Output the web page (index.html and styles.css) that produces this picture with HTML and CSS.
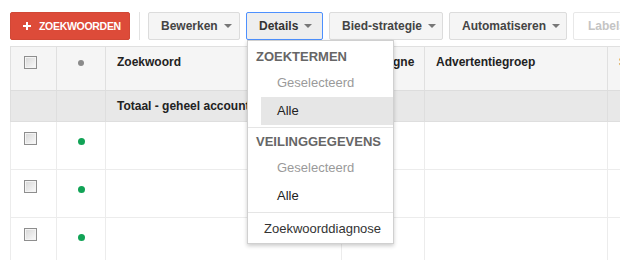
FILE: index.html
```html
<html lang="nl">
	<head>
	<title>Zoekwoorden</title>
	<link rel="stylesheet" href="styles.css">
	</head>
	<body>
<main>

			<div class="toolbar">
				<button class="btn btn-add"><span class="plus"></span>ZOEKWOORDEN</button>
				<span class="toolbar-sep"></span>
				<button class="btn btn-edit">Bewerken <span class="caret"></span></button>

				<!-- Details with its open menu -->
				<div class="dropdown">
					<button class="btn btn-open">Details <span class="caret"></span></button>
					<div class="menu">
						<div class="menu-head">ZOEKTERMEN</div>
						<div class="menu-item disabled">Geselecteerd</div>
						<div class="menu-item hover">Alle</div>
						<div class="menu-sep"></div>
						<div class="menu-head">VEILINGGEGEVENS</div>
						<div class="menu-item disabled">Geselecteerd</div>
						<div class="menu-item">Alle</div>
						<div class="menu-sep"></div>
						<div class="menu-plain">Zoekwoorddiagnose</div>
					</div>
				</div>

				<button class="btn btn-bid">Bied-strategie <span class="caret"></span></button>
				<button class="btn btn-auto">Automatiseren <span class="caret"></span></button>
				<button class="btn btn-off">Labels <span class="caret"></span></button>
			</div>

			<table class="grid">
				<colgroup>
					<col class="c-check"><col class="c-status"><col class="c-kw"><col class="c-camp"><col class="c-group"><col class="c-more">
				</colgroup>
				<thead>
					<tr>
						<th><span class="cb"></span></th>
						<th class="center"><span class="dot dot-head"></span></th>
						<th>Zoekwoord</th>
						<th>Campagne</th>
						<th>Advertentiegroep</th>
						<th>Status</th>
					</tr>
				</thead>
				<tbody>
					<tr class="total">
						<td></td><td></td><td>Totaal - geheel account</td><td></td><td></td><td></td>
					</tr>
					<tr>
						<td><span class="cb"></span></td><td class="center"><span class="dot"></span></td><td></td><td></td><td></td><td></td>
					</tr>
					<tr>
						<td><span class="cb"></span></td><td class="center"><span class="dot"></span></td><td></td><td></td><td></td><td></td>
					</tr>
					<tr>
						<td><span class="cb"></span></td><td class="center"><span class="dot"></span></td><td></td><td></td><td></td><td></td>
					</tr>
				</tbody>
			</table>

</main>
	</body>
</html>
```

FILE: styles.css
```css
html, body { margin:0; overflow:hidden; background:#ffffff; }
body { font-family:"Liberation Sans", Arial, sans-serif; color:#222222; }

/* toolbar */
.toolbar { display:flex; align-items:center; gap:6px; padding:12px 0 0 10px; height:28px; }
.btn { flex-shrink:0; white-space:nowrap; height:28px; padding:0 0 0 12px; border:1px solid #dcdcdc; border-radius:2px; background:#f5f5f5; color:#444444; font-family:inherit; font-size:12px; font-weight:bold; display:flex; align-items:center; gap:6px; }
.btn-add { width:120px; background:#dd4b39; border-color:#d14836; color:#ffffff; font-size:10.5px; letter-spacing:-0.3px; padding:0 0 0 12px; gap:8px; }
.btn-edit { width:92px; }
.btn-open { width:77px; border-color:#4d90fe; background:#eeeeee; color:#333333; }
.btn-bid { width:114px; }
.btn-auto { width:118px; }
.btn-off { width:90px; background:#ffffff; border-color:#e8e8e8; color:#c4c4c4; padding-left:14px; }
.btn-off .caret { border-top-color:#d0d0d0; }
.plus { width:8px; height:8px; flex-shrink:0; display:inline-block; background:linear-gradient(#fff,#fff) center/8px 2px no-repeat, linear-gradient(#fff,#fff) center/2px 8px no-repeat; }
.toolbar-sep { flex-shrink:0; width:1px; height:28px; background:#e2e2e2; margin:0 2px 0 3px; }
.caret { width:0; height:0; border-left:4px solid transparent; border-right:4px solid transparent; border-top:4px solid #777777; }

/* open menu */
.dropdown { position:relative; flex-shrink:0; }
.menu { position:absolute; top:100%; left:1px; width:145px; padding-top:2px; background:#ffffff; border:1px solid #d0d0d0; box-shadow:0 2px 4px rgba(0,0,0,0.2); z-index:2; font-size:13px; }
.menu-head { height:26px; line-height:28px; padding-left:8px; font-weight:bold; color:#666666; }
.menu-item { height:28px; line-height:28px; margin-left:13px; padding-left:16px; color:#222222; }
.menu-item.disabled { color:#9a9a9a; }
.menu-item.hover { background:#e6e6e6; }
.menu-sep { height:1px; background:#e5e5e5; margin:2px 0 0 0; }
.menu-plain { height:30px; line-height:31px; padding-left:16px; color:#333333; }

/* table */
.grid { margin:6px 0 0 10px; border-collapse:collapse; table-layout:fixed; width:720px; font-size:12px; }
.c-check { width:46px; }
.c-status { width:49px; }
.c-kw { width:236px; }
.c-camp { width:83px; }
.c-group { width:183px; }
.c-more { width:123px; }
.grid th { height:44px; padding:8px 11px 0 11px; text-align:left; vertical-align:top; background:#f5f5f5; border:1px solid #e0e0e0; border-bottom-color:#dddddd; color:#222222; line-height:14px; }
.grid td { height:48px; padding:9px 11px 0 11px; vertical-align:top; border:1px solid #ececec; }
.grid th:first-child, .grid td:first-child { padding-left:13px; }
.grid .center { text-align:center; padding-left:0; padding-right:0; }
.grid tr.total td { height:31px; padding:0 11px; vertical-align:middle; background:#e8e8e8; border-color:#dedede; font-weight:bold; }

.cb { display:inline-block; width:11px; height:11px; border:1px solid #8e8e8e; box-shadow:inset 0 0 0 1px #f4f4f4; background:linear-gradient(135deg, #d6d6d6, #fbfbfb); vertical-align:top; margin-top:1px; }
.dot { display:inline-block; width:7px; height:7px; border-radius:50%; background:#11a356; margin-top:7px; }
.dot-head { width:6px; height:6px; background:#8a8a8a; margin-top:5px; }
```
